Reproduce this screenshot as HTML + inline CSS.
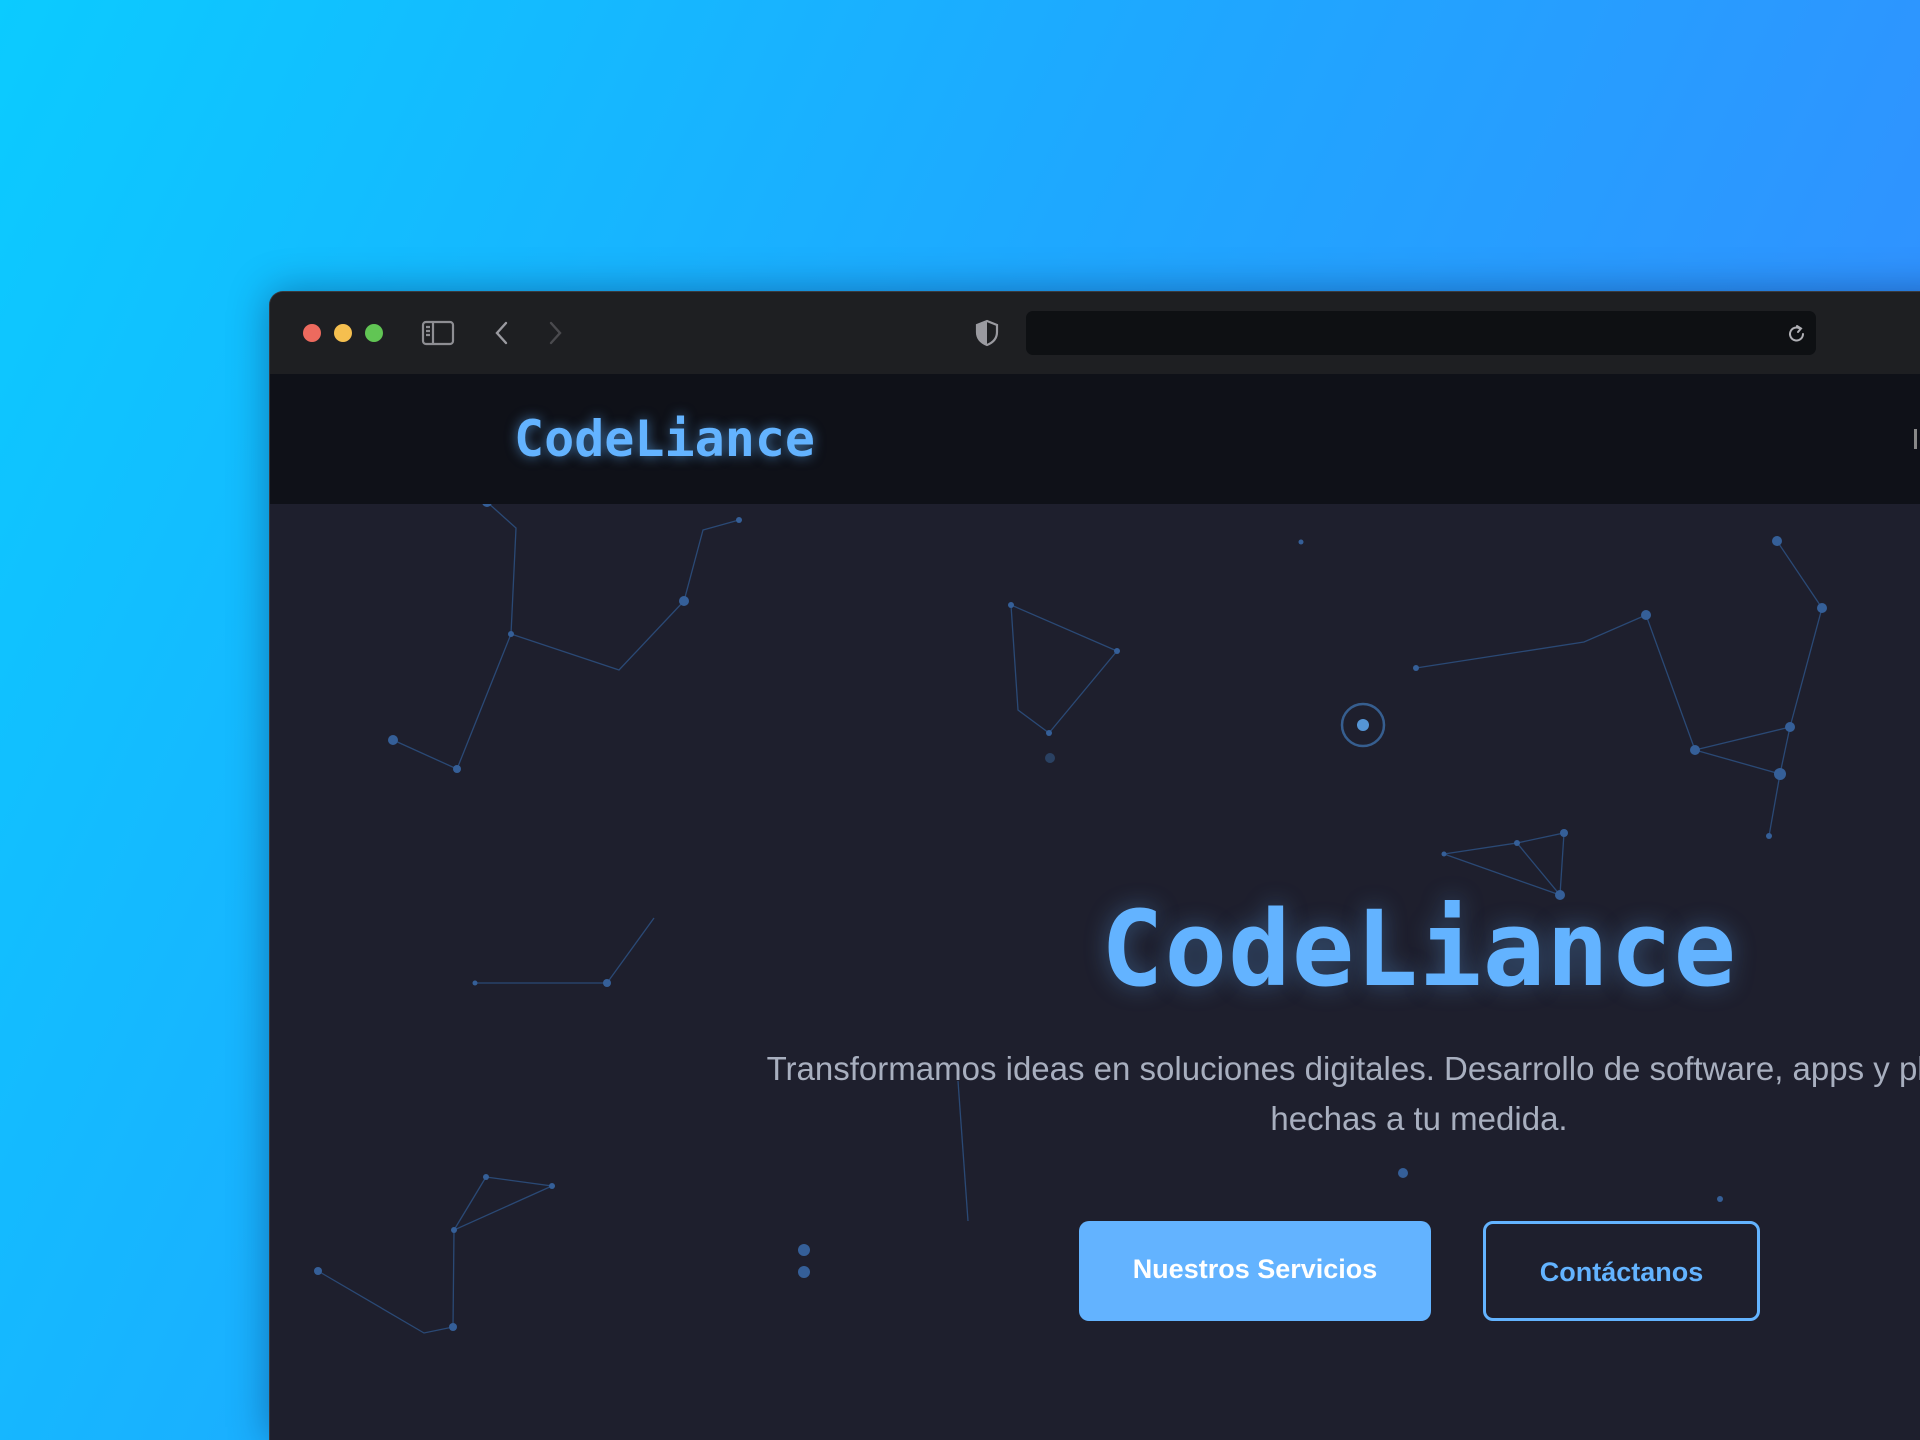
<!DOCTYPE html>
<html style="background:#1aaaff"><head><meta charset="utf-8"><style>
*{margin:0;padding:0;box-sizing:border-box}
html,body{width:1920px;height:1440px;overflow:hidden}
body{background:linear-gradient(115deg,#0bcbff 0%,#1ea8ff 45%,#3a86ff 100%);font-family:"Liberation Sans",sans-serif;position:relative}
.win{position:absolute;left:269px;top:291px;width:1700px;height:1149px;border-radius:14px 14px 0 0;overflow:hidden;background:#1e1f2d;border:1.5px solid #3a3a3e;border-bottom:none;box-shadow:0 0 40px rgba(0,0,40,.35)}
.tb{position:absolute;left:0;top:0;right:0;height:82px;background:#1e1f22}
.dot{position:absolute;top:32px;width:18px;height:18px;border-radius:50%}
.url{position:absolute;left:756px;top:19px;width:790px;height:44px;background:#0e1013;border-radius:7px}
.nav{position:absolute;left:0;top:82px;right:0;height:130px;background:#0f1118}
.logo{position:absolute;left:244px;top:36px;font-family:"DejaVu Sans Mono","Liberation Mono",monospace;font-weight:bold;font-size:50px;color:#63b3ff;text-shadow:0 0 12px rgba(99,179,255,.6)}
.title{position:absolute;left:0;width:2298px;top:596px;text-align:center;font-family:"DejaVu Sans Mono","Liberation Mono",monospace;font-weight:bold;font-size:104px;letter-spacing:1px;color:#63b3ff;text-shadow:0 0 24px rgba(99,179,255,.35)}
.sub{position:absolute;left:0;width:2298px;top:752px;text-align:center;font-size:33px;line-height:50px;color:#a8afbf;white-space:nowrap}
.b1{position:absolute;left:809px;top:929px;width:352px;height:100px;background:#63b3ff;border-radius:10px;color:#fff;font-size:27px;font-weight:bold;text-align:center;line-height:96px}
.b2{position:absolute;left:1213px;top:929px;width:277px;height:100px;border:3px solid #63b3ff;border-radius:10px;color:#63b3ff;font-size:27px;font-weight:bold;text-align:center;line-height:96px}
</style></head><body>
<div class="win">
 <div class="tb">
  <div class="dot" style="left:33px;background:#ed6a5e"></div>
  <div class="dot" style="left:64px;background:#f5bf4f"></div>
  <div class="dot" style="left:95px;background:#61c554"></div>
  <svg style="position:absolute;left:151px;top:27px" width="34" height="28" viewBox="0 0 34 28" fill="none" stroke="#8e8e93" stroke-width="2.2"><rect x="2" y="3" width="30" height="22" rx="3"/><line x1="12" y1="3" x2="12" y2="25"/><line x1="5" y1="8" x2="9" y2="8"/><line x1="5" y1="12" x2="9" y2="12"/><line x1="5" y1="16" x2="9" y2="16"/></svg>
  <svg style="position:absolute;left:222px;top:28px" width="20" height="26" viewBox="0 0 20 26" fill="none" stroke="#9a9aa0" stroke-width="2.4" stroke-linecap="round"><path d="M14 3 L5 13 L14 23"/></svg>
  <svg style="position:absolute;left:275px;top:28px" width="20" height="26" viewBox="0 0 20 26" fill="none" stroke="#4a4a4e" stroke-width="2.4" stroke-linecap="round"><path d="M6 3 L15 13 L6 23"/></svg>
  <svg style="position:absolute;left:704px;top:27px" width="26" height="28" viewBox="0 0 26 28"><path d="M13 2 L23 6 V13 C23 20 18 24 13 26 C8 24 3 20 3 13 V6 Z" fill="none" stroke="#9a9aa0" stroke-width="2.2"/><path d="M13 2 L3 6 V13 C3 20 8 24 13 26 Z" fill="#9a9aa0"/></svg>
  <div class="url"></div>
  <svg style="position:absolute;left:1516px;top:31px" width="22" height="22" viewBox="0 0 22 22" fill="none" stroke="#b0b0b5" stroke-width="2" stroke-linecap="round"><path d="M17 11 A6.5 6.5 0 1 1 14 5.5"/><path d="M11 3 L15 5.5 L12 9"/></svg>
 </div>
 <div class="nav"><div class="logo">CodeLiance</div><div style="position:absolute;left:1644px;top:55px;width:3px;height:20px;background:#888"></div></div>
 <svg style="position:absolute;left:0;top:212px" width="1700" height="1000" fill="none" stroke="#2e5488" stroke-width="1.3" opacity=".8">
  <g>
   <path d="M173 -7 L217 -2 L246 24 L241 130 L349 166 L414 97 L433 26 L469 16"/>
   <path d="M123 236 L187 265 L241 130"/>
   <path d="M741 101 L748 206 L779 229 L847 147 L741 101"/>
   <path d="M1146 164 L1314 138 L1376 111 L1425 246 L1520 223 L1510 270 L1499 332"/>
   <path d="M1425 246 L1510 270"/>
   <path d="M1507 37 L1552 104 L1520 223"/>
   <path d="M1174 350 L1247 339 L1294 329 L1290 391 L1247 339 L1174 350 L1290 391"/>
   <path d="M205 479 L337 479 L384 414"/>
   <path d="M216 673 L282 682 L184 726 L183 823 L154 829 L48 767"/>
   <path d="M216 673 L184 726"/>
   <path d="M688 577 L698 717"/>
  </g>
  <g fill="#3b6fb3" stroke="none">
   <circle cx="217" cy="-2" r="5"/><circle cx="241" cy="130" r="3"/><circle cx="414" cy="97" r="5"/><circle cx="469" cy="16" r="3"/>
   <circle cx="123" cy="236" r="5"/><circle cx="187" cy="265" r="4"/>
   <circle cx="741" cy="101" r="3"/><circle cx="779" cy="229" r="3"/><circle cx="847" cy="147" r="3"/><circle cx="780" cy="254" r="5" fill="#2d4a70"/>
   <circle cx="1031" cy="38" r="2.5"/><circle cx="1146" cy="164" r="3"/><circle cx="1376" cy="111" r="5"/><circle cx="1425" cy="246" r="5"/>
   <circle cx="1520" cy="223" r="5"/><circle cx="1510" cy="270" r="6"/><circle cx="1499" cy="332" r="3"/><circle cx="1507" cy="37" r="5"/><circle cx="1552" cy="104" r="5"/>
   <circle cx="1174" cy="350" r="2.5"/><circle cx="1247" cy="339" r="3"/><circle cx="1294" cy="329" r="4"/><circle cx="1290" cy="391" r="5"/>
   <circle cx="205" cy="479" r="2.5"/><circle cx="337" cy="479" r="4"/>
   <circle cx="216" cy="673" r="3"/><circle cx="282" cy="682" r="3"/><circle cx="184" cy="726" r="3"/><circle cx="183" cy="823" r="4"/><circle cx="48" cy="767" r="4"/>
   <circle cx="534" cy="746" r="6"/><circle cx="534" cy="768" r="6"/>
   <circle cx="1133" cy="669" r="5"/><circle cx="1019" cy="1120" r="5"/><circle cx="1450" cy="695" r="3"/>
  </g>
  <circle cx="1093" cy="221" r="21" stroke="#3d6ea8" stroke-width="2.5"/>
  <circle cx="1093" cy="221" r="6" fill="#63b3ff" stroke="none"/>
 </svg>
 <div class="title">CodeLiance</div>
 <div class="sub">Transformamos ideas en soluciones digitales. Desarrollo de software, apps y plataformas<br>hechas a tu medida.</div>
 <div class="b1">Nuestros Servicios</div>
 <div class="b2">Contáctanos</div>
</div>
</body></html>
